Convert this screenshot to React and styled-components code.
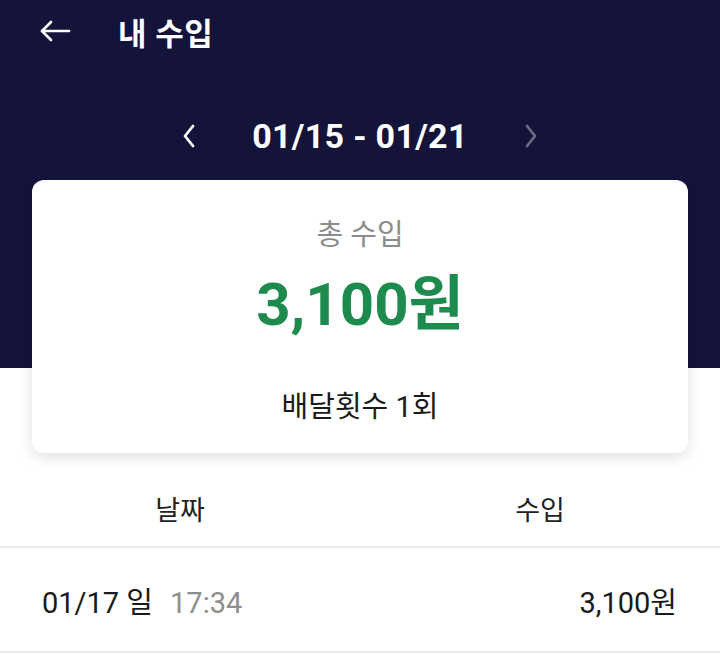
import React from 'react';
import styled, { createGlobalStyle } from 'styled-components';

const GlobalStyle = createGlobalStyle`
  * { box-sizing: border-box; }
  body {
    margin: 0;
    background: #ffffff;
    font-family: Roboto, "Noto Sans CJK KR", sans-serif;
  }
`

const Page = styled.div`
  width: 720px;
  min-height: 658px;
  background: #ffffff;
`

const Top = styled.div`
  background: linear-gradient(to bottom, #14133a 0, #14133a 368px, #ffffff 368px);
`

const TopBar = styled.div`
  display: flex;
  align-items: center;
  height: 62px;
  padding-left: 39px;
`

const Title = styled.h1`
  margin: 0 0 0 47px;
  font-size: 31px;
  font-weight: 700;
  color: #ffffff;
  letter-spacing: 0.5px;
`

const DateNav = styled.div`
  display: flex;
  align-items: center;
  justify-content: center;
  gap: 56px;
  height: 60px;
  margin-top: 44px;
`

const DateText = styled.span`
  font-size: 34px;
  font-weight: 700;
  color: #ffffff;
  letter-spacing: 0.3px;
`

const NavButton = styled.span`
  display: flex;
  color: ${p => (p.disabled ? '#6c6b80' : '#ffffff')};
`

const Card = styled.div`
  margin: 14px 32px 0;
  height: 273px;
  padding-top: 38px;
  background: #ffffff;
  border-radius: 12px;
  box-shadow: 0 4px 14px rgba(0, 0, 0, 0.13);
  display: flex;
  flex-direction: column;
  align-items: center;
`

const CardLabel = styled.div`
  font-size: 29px;
  line-height: 34px;
  color: #8c8c8c;
`

const Amount = styled.div`
  margin-top: 18px;
  font-size: 60px;
  line-height: 70px;
  font-weight: 700;
  color: #1d8a4e;
`

const Count = styled.div`
  margin-top: 50px;
  font-size: 29px;
  line-height: 34px;
  color: #1a1a1a;
`

const Table = styled.div`
  margin-top: 17px;
`

const HeadRow = styled.div`
  display: grid;
  grid-template-columns: 1fr 1fr;
  align-items: center;
  height: 78px;
  border-bottom: 2px solid #e9e9e9;
`

const HeadCell = styled.div`
  text-align: center;
  font-size: 27px;
  color: #222222;
`

const Row = styled.div`
  display: flex;
  align-items: center;
  justify-content: space-between;
  height: 105px;
  padding: 0 43px 0 42px;
  border-bottom: 2px solid #e9e9e9;
`

const DateCell = styled.div`
  display: flex;
  align-items: baseline;
  gap: 17px;
  font-size: 29px;
  color: #1a1a1a;
`

const Time = styled.span`
  color: #8e8e8e;
`

const Money = styled.div`
  font-size: 29px;
  color: #1a1a1a;
`

const BackArrow = () => (
  <svg width="32" height="22" viewBox="0 0 32 22" fill="none" stroke="#ffffff" strokeWidth="2.6" strokeLinecap="round" strokeLinejoin="round">
    <path d="M30 11H3" />
    <path d="M12 2L3 11l9 9" />
  </svg>
)

const Chevron = ({ dir }) => (
  <svg width="14" height="24" viewBox="0 0 14 24" fill="none" stroke="currentColor" strokeWidth="2.8" strokeLinecap="round" strokeLinejoin="round">
    {dir === 'left' ? <path d="M11 2L3 12l8 10" /> : <path d="M3 2l8 10-8 10" />}
  </svg>
)

const App = () => {
  const rows = [{ date: '01/17 일', time: '17:34', amount: '3,100원' }];

  return (
    <Page>
      <GlobalStyle />
      <Top>
        <TopBar>
          <BackArrow />
          <Title>내 수입</Title>
        </TopBar>
        <DateNav>
          <NavButton><Chevron dir="left" /></NavButton>
          <DateText>01/15 - 01/21</DateText>
          <NavButton disabled><Chevron dir="right" /></NavButton>
        </DateNav>
        <Card>
          <CardLabel>총 수입</CardLabel>
          <Amount>3,100원</Amount>
          <Count>배달횟수 1회</Count>
        </Card>
      </Top>
      <Table>
        <HeadRow>
          <HeadCell>날짜</HeadCell>
          <HeadCell>수입</HeadCell>
        </HeadRow>
        {rows.map(r => (
          <Row key={r.date + r.time}>
            <DateCell>
              {r.date}
              <Time>{r.time}</Time>
            </DateCell>
            <Money>{r.amount}</Money>
          </Row>
        ))}
      </Table>
    </Page>
  )
}

export default App;
